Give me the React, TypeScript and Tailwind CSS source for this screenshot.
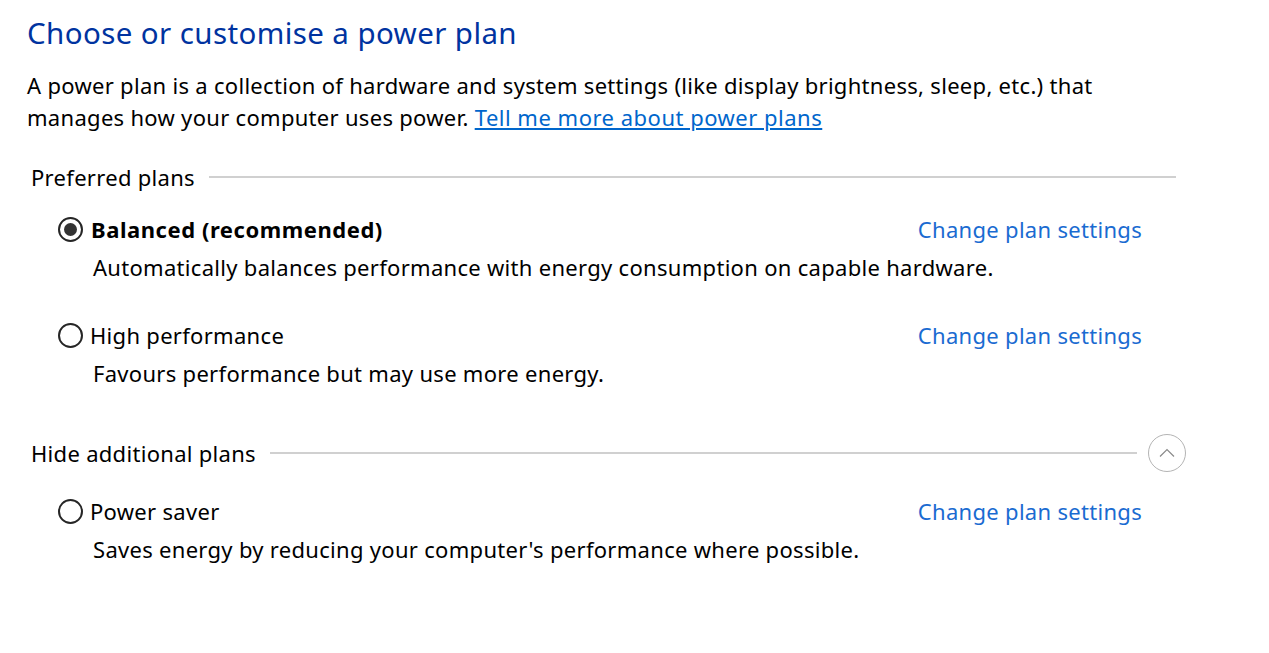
import React from "react";

function Radio({ checked }: { checked?: boolean }) {
  return (
    <span className="w-[25px] h-[25px] rounded-full border-2 border-[#262626] flex items-center justify-center shrink-0">
      {checked && <span className="w-[13px] h-[13px] rounded-full bg-[#333333]" />}
    </span>
  );
}

function Plan({ name, desc, checked }: { name: string; desc: string; checked?: boolean }) {
  return (
    <div className="pl-[31px] pr-[34px]">
      <div className="flex items-center h-[38px]">
        <Radio checked={checked} />
        <span className={checked ? "ml-[8px] font-bold tracking-[0.55px]" : "ml-[7px]"}>{name}</span>
        <a className="ml-auto text-[#1a6bd1] cursor-pointer">Change plan settings</a>
      </div>
      <div className="h-[38px] flex items-center pl-[35px]">{desc}</div>
    </div>
  );
}

export default function App() {
  return (
    <div className="w-[1269px] h-[653px] bg-white text-black font-['Noto_Sans',sans-serif] text-[22px] tracking-[0.3px] overflow-hidden">
      <div className="pl-[27px] pt-[13px] w-[1176px]">
        <h1 className="text-[29.5px] leading-[40px] tracking-[0.4px] text-[#0033a0] font-normal">Choose or customise a power plan</h1>
        <p className="mt-[16px] leading-[32px]">
          A power plan is a collection of hardware and system settings (like display brightness, sleep, etc.) that
          <br />
          manages how your computer uses power.{" "}
          <a className="text-[#0066cc] underline tracking-[0.5px] cursor-pointer">Tell me more about power plans</a>
        </p>
        <div className="mt-[25px] flex items-center h-[38px] pl-[4px]">
          <span>Preferred plans</span>
          <span className="flex-1 h-[2px] bg-[#d0d0d0] ml-[14px]" />
        </div>
        <div className="mt-[14px]">
          <Plan checked name="Balanced (recommended)" desc="Automatically balances performance with energy consumption on capable hardware." />
        </div>
        <div className="mt-[30px]">
          <Plan name="High performance" desc="Favours performance but may use more energy." />
        </div>
        <div className="mt-[42px] flex items-center h-[38px] pl-[4px] -mr-[10px]">
          <span>Hide additional plans</span>
          <span className="flex-1 h-[2px] bg-[#d0d0d0] ml-[14px] mr-[11px]" />
          <span className="w-[38px] h-[38px] rounded-full border border-[#b4b4b4] flex items-center justify-center">
            <svg width="16" height="10" viewBox="0 0 16 10" fill="none">
              <path d="M1 8.5 L8 1.5 L15 8.5" stroke="#8a8a8a" strokeWidth="1.2" />
            </svg>
          </span>
        </div>
        <div className="mt-[20px]">
          <Plan name="Power saver" desc="Saves energy by reducing your computer's performance where possible." />
        </div>
      </div>
    </div>
  );
}
